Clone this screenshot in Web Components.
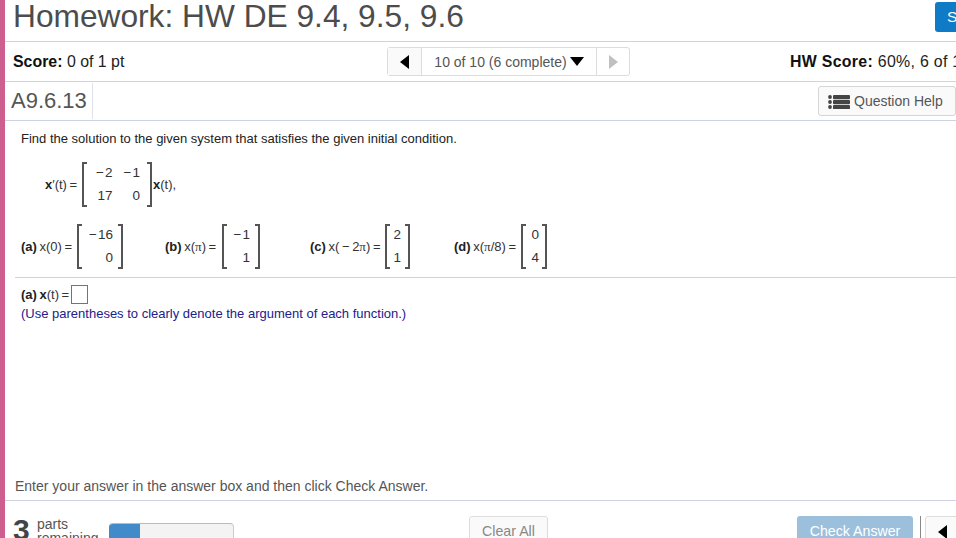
<!DOCTYPE html>
<html>
<head>
<meta charset="utf-8">
<title>Homework</title>
<style>
  html, body { margin: 0; padding: 0; height: 538px; overflow: hidden; background: #fff; }
  body { font-family: "Liberation Sans", Arial, sans-serif; color: #000; }
</style>
</head>
<body>
<hw-page>
  <hw-header slot="top" title-text="Homework: HW DE 9.4, 9.5, 9.6"></hw-header>
  <hw-scorebar slot="top"></hw-scorebar>
  <hw-questionbar slot="top" name="A9.6.13"></hw-questionbar>
  <hw-problem slot="top"></hw-problem>
  <hw-footer slot="bottom"></hw-footer>
</hw-page>

<script>
const LINE = "#cdd3e0"

class HwPage extends HTMLElement {
  constructor() {
    super()
    this.attachShadow({ mode: "open" }).innerHTML = `
    <style>
      :host { display: flex; flex-direction: column; justify-content: space-between; height: 538px; overflow: hidden; border-left: 5px solid #cd5f8e; box-sizing: border-box; }
      .top, .bottom { display: block; }
    </style>
    <div class="top"><slot name="top"></slot></div>
    <div class="bottom"><slot name="bottom"></slot></div>`
  }
}

class HwHeader extends HTMLElement {
  constructor() {
    super()
    this.attachShadow({ mode: "open" }).innerHTML = `
    <style>
      :host { display: flex; justify-content: space-between; height: 41px; border-bottom: 1px solid ${LINE}; overflow: hidden; }
      h1 { margin: 0 0 0 8px; font: 400 31.7px/32px "Liberation Sans", Arial, sans-serif; color: #4c4c4c; white-space: nowrap; }
      .save { width: 21px; height: 30px; margin-top: 2px; background: #0f7ac6; border-radius: 3px 0 0 3px; color: #fff; font-size: 15.5px; line-height: 30px; padding-left: 12px; box-sizing: border-box; overflow: hidden; }
    </style>
    <h1></h1>
    <div class="save">S</div>`
    this.shadowRoot.querySelector("h1").textContent = this.getAttribute("title-text")
  }
}

class HwScorebar extends HTMLElement {
  constructor() {
    super()
    this.attachShadow({ mode: "open" }).innerHTML = `
    <style>
      :host { display: grid; grid-template-columns: 382px 243px 1fr; align-items: center; height: 39px; border-bottom: 1px solid ${LINE}; font-size: 15.9px; color: #222; white-space: nowrap; overflow: hidden; }
      .left { padding-left: 8px; }
      .right { padding-left: 160px; letter-spacing: .3px; }
      b { color: #111; }
      .pager { display: flex; height: 29px; border: 1px solid #dcdcdc; border-radius: 3px; box-sizing: border-box; font-size: 14px; color: #555; }
      .pager > div { display: flex; align-items: center; justify-content: center; box-sizing: border-box; flex: none; }
      .prev { width: 34px; background: #fafafa; border-right: 1px solid #dcdcdc; }
      .mid { width: 175px; gap: 3px; border-right: 1px solid #dcdcdc; }
      .next { width: 32px; }
      svg { display: block; }
    </style>
    <div class="left"><b>Score:</b> 0 of 1 pt</div>
    <div class="pager">
      <div class="prev"><svg width="9" height="14"><path d="M9 0V14L0 7Z" fill="#000"/></svg></div>
      <div class="mid"><span>10 of 10 (6 complete)</span><svg width="14" height="9"><path d="M0 0H14L7 9Z" fill="#000"/></svg></div>
      <div class="next"><svg width="9" height="14"><path d="M0 0V14L9 7Z" fill="#c0c0c0"/></svg></div>
    </div>
    <div class="right"><b>HW Score:</b> 60%, 6 of 10</div>`
  }
}

class HwQuestionbar extends HTMLElement {
  constructor() {
    super()
    this.attachShadow({ mode: "open" }).innerHTML = `
    <style>
      :host { display: flex; justify-content: space-between; align-items: flex-start; height: 38px; border-bottom: 1px solid ${LINE}; }
      .name { width: 88px; height: 36px; margin-top: 1px; padding-left: 6px; box-sizing: border-box; border-right: 1px solid #dfe2ea; font-size: 22px; line-height: 35px; color: #555; }
      .help { display: flex; align-items: center; gap: 4px; width: 138px; height: 30px; margin: 4px 0 0; padding-left: 9px; box-sizing: border-box; background: #fafafa; border: 1px solid #d5d5d5; border-radius: 3px; font-size: 14px; color: #555; white-space: nowrap; }
      svg { display: block; flex: none; }
    </style>
    <div class="name"></div>
    <div class="help">
      <svg width="22" height="15" fill="#444"><circle cx="2" cy="3" r="1.9"/><circle cx="2" cy="8" r="1.9"/><circle cx="2" cy="13" r="1.9"/><rect x="5" y="1" width="17" height="4.2" rx="1"/><rect x="5" y="6" width="17" height="4.2" rx="1"/><rect x="5" y="11" width="17" height="4.2" rx="1"/></svg>
      Question Help
    </div>`
    this.shadowRoot.querySelector(".name").textContent = this.getAttribute("name")
  }
}

class BracketMatrix extends HTMLElement {
  constructor() {
    super()
    const rows = this.getAttribute("rows").split(";").map(r => r.split(","))
    const cells = rows.flat().map(c => `<span>${c}</span>`).join("")
    this.attachShadow({ mode: "open" }).innerHTML = `
    <style>
      :host { display: block; flex: none; }
      .m { position: relative; display: grid; grid-template-columns: repeat(${rows[0].length}, auto); column-gap: var(--gap, 0); row-gap: 1px; justify-content: end; justify-items: end; box-sizing: border-box; width: var(--w, 40px); height: 45px; padding-right: var(--pr, 10px); font-size: 13.5px; }
      .m::before, .m::after { content: ""; position: absolute; top: 0; bottom: 0; width: 3px; border: 2px solid #555; }
      .m::before { left: 0; border-right: 0; }
      .m::after { right: 0; border-left: 0; }
      span { line-height: 22px; color: #333; }
    </style>
    <div class="m">${cells}</div>`
  }
}

class HwProblem extends HTMLElement {
  constructor() {
    super()
    this.attachShadow({ mode: "open" }).innerHTML = `
    <style>
      :host { display: block; padding: 10px 0 0 10px; font-size: 13px; color: #222; white-space: nowrap; }
      .pad { padding-left: 6px; }
      .find { line-height: 16px; }
      .eqn { display: flex; align-items: center; color: #333; }
      .sys { margin: 15px 0 0 24px; }
      .inits { display: grid; grid-template-columns: 150px 145px 144px auto; margin-top: 17px; padding-bottom: 8px; border-bottom: 1px solid ${LINE}; }
      .label { flex: none; word-spacing: -1px; }
      .pi { font-family: "Liberation Serif", "Times New Roman", serif; }
      b { color: #222; }
      .ans { display: flex; align-items: center; gap: 2px; margin-top: 7px; line-height: 19px; color: #333; }
      .box { display: block; width: 17px; height: 19px; box-sizing: border-box; border: 1px solid #2a8fa8; }
      .note { line-height: 16px; color: #22208c; margin-top: 2px; }
    </style>
    <div class="pad find">Find the solution to the given system that satisfies the given initial condition.</div>
    <div class="pad eqn sys"><span class="label" style="width:37px"><b>x</b>&prime;(t) =</span><bracket-matrix rows="&minus;&hairsp;2,&minus;&hairsp;1;17,0" style="--w:70px;--gap:11px;--pr:12px"></bracket-matrix><span style="margin-left:1px"><b>x</b>(t),</span></div>
    <div class="inits">
      <div class="pad eqn"><span class="label" style="width:56px"><b>(a)</b> x(0) =</span><bracket-matrix rows="&minus;&hairsp;16;0" style="--w:46px;--pr:10px"></bracket-matrix></div>
      <div class="eqn"><span class="label" style="width:57px"><b>(b)</b> x(<span class="pi">&pi;</span>) =</span><bracket-matrix rows="&minus;&hairsp;1;1" style="--w:38px;--pr:10px"></bracket-matrix></div>
      <div class="eqn"><span class="label" style="width:75px"><b>(c)</b> x(&thinsp;&minus;&thinsp;2<span class="pi">&pi;</span>) =</span><bracket-matrix rows="2;1" style="--w:25px;--pr:9px"></bracket-matrix></div>
      <div class="eqn"><span class="label" style="width:67px"><b>(d)</b> x(<span class="pi">&pi;</span>/8) =</span><bracket-matrix rows="0;4" style="--w:26px;--pr:8px"></bracket-matrix></div>
    </div>
    <div class="pad ans"><span class="label"><b>(a) x</b>(t) =</span><span class="box"></span></div>
    <div class="pad note">(Use parentheses to clearly denote the argument of each function.)</div>`
  }
}

class HwFooter extends HTMLElement {
  constructor() {
    super()
    this.attachShadow({ mode: "open" }).innerHTML = `
    <style>
      :host { display: block; height: 67px; overflow: hidden; }
      .msg { height: 29px; padding-left: 10px; border-bottom: 1px solid ${LINE}; font-size: 14px; line-height: 31px; color: #555; }
      .bar { display: flex; align-items: flex-start; padding-top: 15px; color: #555; white-space: nowrap; }
      .bar > * { flex: none; }
      .num { width: 24px; margin-left: 8px; margin-top: -1px; font: 700 30px/30px "Liberation Sans", Arial, sans-serif; color: #444; }
      .parts { width: 72px; font-size: 14px; line-height: 14px; margin-top: 1px; }
      .progress { width: 125px; height: 20px; margin-top: 7px; background: #f3f3f3; border: 1px solid #ccc; border-top-color: #bbb; border-left: 0; border-radius: 4px; box-sizing: border-box; overflow: hidden; }
      .progress div { width: 31px; height: 100%; background: #428bca; }
      .btn { height: 30px; box-sizing: border-box; border-radius: 3px; font-size: 14.2px; line-height: 30px; text-align: center; }
      .clear { width: 79px; margin-left: 235px; border: 1px solid #ddd; color: #888; background: #fafafa; line-height: 28px; }
      .check { width: 116px; margin-left: 249px; background: #9cc0dc; color: #fff; }
      .sep { width: 1px; height: 22px; margin-left: 7px; background: #888; }
      .back { width: 40px; height: 30px; margin-left: 4px; padding: 8px 0 0 12px; border: 1px solid #ddd; border-radius: 3px; box-sizing: border-box; background: #fafafa; }
      svg { display: block; }
    </style>
    <div class="msg">Enter your answer in the answer box and then click Check Answer.</div>
    <div class="bar">
      <div class="num">3</div>
      <div class="parts">parts<br>remaining</div>
      <div class="progress"><div></div></div>
      <div class="btn clear">Clear All</div>
      <div class="btn check">Check Answer</div>
      <div class="sep"></div>
      <div class="back"><svg width="9" height="14"><path d="M9 0V14L0 7Z" fill="#000"/></svg></div>
    </div>`
  }
}

customElements.define("bracket-matrix", BracketMatrix)
customElements.define("hw-page", HwPage)
customElements.define("hw-header", HwHeader)
customElements.define("hw-scorebar", HwScorebar)
customElements.define("hw-questionbar", HwQuestionbar)
customElements.define("hw-problem", HwProblem)
customElements.define("hw-footer", HwFooter)
</script>
</body>
</html>
